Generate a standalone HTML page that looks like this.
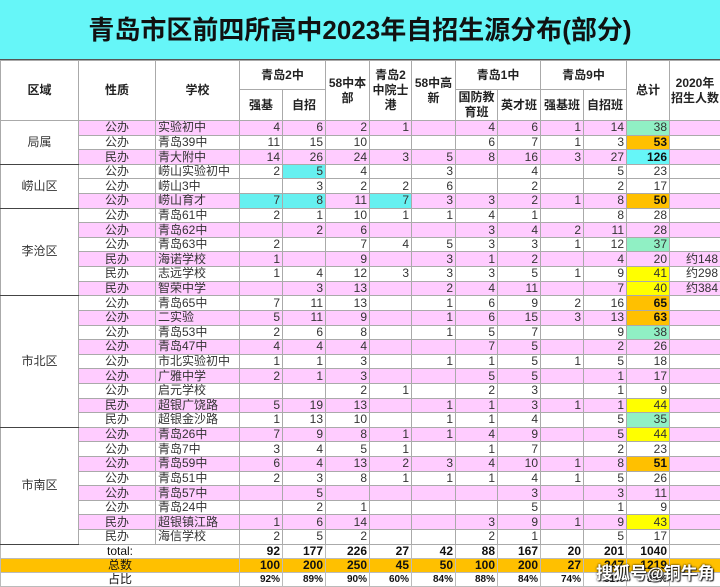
<!DOCTYPE html>
<html><head><meta charset="utf-8"><style>
*{margin:0;padding:0;box-sizing:border-box}
body{width:720px;height:585px;overflow:hidden;background:#fff;font-family:"Liberation Sans","Noto Sans CJK SC",sans-serif;position:relative}
.title{height:60px;background:#66f6f8;text-align:center;font-size:26px;font-weight:bold;line-height:60px;color:#111;border-bottom:1px solid #555}
table{border-collapse:collapse;table-layout:fixed;width:720px;position:absolute;top:60px;left:0}
td{border:1px solid #aaa;font-size:12px;color:#333;padding:0 2px;white-space:nowrap;overflow:hidden;line-height:13px}
thead td{font-weight:bold;color:#222;text-align:center;white-space:normal;font-size:12px;line-height:15px;padding:0}
tbody tr{height:14.62px}
td.n{text-align:right}
td.c{text-align:center}
tr.p td:not(.d){background:#ffccff}
.cy{background:#66f0f0!important}
.g{background:#90f0c4!important}
.o{background:#ffc000!important;font-weight:bold;color:#111}
.y{background:#ffff00!important}
.b{background:#66f6f8!important;font-weight:bold;color:#111}
td.d{text-align:center;background:#fff;border-top:1px solid #444;border-bottom:1px solid #444}
tfoot tr{height:14px}
tfoot td{font-weight:bold;color:#111;text-align:right;border-color:#bbb}
tfoot tr.t td{border-top:1px solid #444}
tfoot tr.s td{background:#ffc000}
tfoot tr.r td{font-size:10px}
tfoot tr.r td.l{font-size:12px}
tfoot td.l{text-align:center;font-weight:normal}
.wm{position:absolute;left:596px;top:559px;font-size:17px;font-weight:bold;color:#fff;text-shadow:0 0 2px #000,1px 1px 1px #333;letter-spacing:0px}
</style></head><body>
<div class="title">青岛市区前四所高中2023年自招生源分布(部分)</div>
<table>
<colgroup><col style="width:78px"><col style="width:77px"><col style="width:84px"><col style="width:43px"><col style="width:43px"><col style="width:44px"><col style="width:42px"><col style="width:44px"><col style="width:42px"><col style="width:43px"><col style="width:43px"><col style="width:43px"><col style="width:43px"><col style="width:51px"></colgroup>
<thead>
<tr style="height:29px"><td rowspan="2">区域</td><td rowspan="2">性质</td><td rowspan="2">学校</td><td colspan="2">青岛2中</td><td rowspan="2">58中本<br>部</td><td rowspan="2">青岛2<br>中院士<br>港</td><td rowspan="2">58中高<br>新</td><td colspan="2">青岛1中</td><td colspan="2">青岛9中</td><td rowspan="2">总计</td><td rowspan="2">2020年<br>招生人数</td></tr>
<tr style="height:29px"><td>强基</td><td>自招</td><td>国防教<br>育班</td><td>英才班</td><td>强基班</td><td>自招班</td></tr>
</thead>
<tbody>
<tr class="p"><td class="d" rowspan="3">局属</td><td class="c">公办</td><td>实验初中</td><td class="n">4</td><td class="n">6</td><td class="n">2</td><td class="n">1</td><td class="n"></td><td class="n">4</td><td class="n">6</td><td class="n">1</td><td class="n">14</td><td class="n g">38</td><td></td></tr>
<tr><td class="c">公办</td><td>青岛39中</td><td class="n">11</td><td class="n">15</td><td class="n">10</td><td class="n"></td><td class="n"></td><td class="n">6</td><td class="n">7</td><td class="n">1</td><td class="n">3</td><td class="n o">53</td><td></td></tr>
<tr class="p"><td class="c">民办</td><td>青大附中</td><td class="n">14</td><td class="n">26</td><td class="n">24</td><td class="n">3</td><td class="n">5</td><td class="n">8</td><td class="n">16</td><td class="n">3</td><td class="n">27</td><td class="n b">126</td><td></td></tr>
<tr><td class="d" rowspan="3">崂山区</td><td class="c">公办</td><td>崂山实验初中</td><td class="n">2</td><td class="n cy">5</td><td class="n">4</td><td class="n"></td><td class="n">3</td><td class="n"></td><td class="n">4</td><td class="n"></td><td class="n">5</td><td class="n">23</td><td></td></tr>
<tr><td class="c">公办</td><td>崂山3中</td><td class="n"></td><td class="n">3</td><td class="n">2</td><td class="n">2</td><td class="n">6</td><td class="n"></td><td class="n">2</td><td class="n"></td><td class="n">2</td><td class="n">17</td><td></td></tr>
<tr class="p"><td class="c">公办</td><td>崂山育才</td><td class="n cy">7</td><td class="n cy">8</td><td class="n">11</td><td class="n cy">7</td><td class="n">3</td><td class="n">3</td><td class="n">2</td><td class="n">1</td><td class="n">8</td><td class="n o">50</td><td></td></tr>
<tr><td class="d" rowspan="6">李沧区</td><td class="c">公办</td><td>青岛61中</td><td class="n">2</td><td class="n">1</td><td class="n">10</td><td class="n">1</td><td class="n">1</td><td class="n">4</td><td class="n">1</td><td class="n"></td><td class="n">8</td><td class="n">28</td><td></td></tr>
<tr class="p"><td class="c">公办</td><td>青岛62中</td><td class="n"></td><td class="n">2</td><td class="n">6</td><td class="n"></td><td class="n"></td><td class="n">3</td><td class="n">4</td><td class="n">2</td><td class="n">11</td><td class="n">28</td><td></td></tr>
<tr><td class="c">公办</td><td>青岛63中</td><td class="n">2</td><td class="n"></td><td class="n">7</td><td class="n">4</td><td class="n">5</td><td class="n">3</td><td class="n">3</td><td class="n">1</td><td class="n">12</td><td class="n g">37</td><td></td></tr>
<tr class="p"><td class="c">民办</td><td>海诺学校</td><td class="n">1</td><td class="n"></td><td class="n">9</td><td class="n"></td><td class="n">3</td><td class="n">1</td><td class="n">2</td><td class="n"></td><td class="n">4</td><td class="n">20</td><td class="n">约148</td></tr>
<tr><td class="c">民办</td><td>志远学校</td><td class="n">1</td><td class="n">4</td><td class="n">12</td><td class="n">3</td><td class="n">3</td><td class="n">3</td><td class="n">5</td><td class="n">1</td><td class="n">9</td><td class="n y">41</td><td class="n">约298</td></tr>
<tr class="p"><td class="c">民办</td><td>智荣中学</td><td class="n"></td><td class="n">3</td><td class="n">13</td><td class="n"></td><td class="n">2</td><td class="n">4</td><td class="n">11</td><td class="n"></td><td class="n">7</td><td class="n y">40</td><td class="n">约384</td></tr>
<tr><td class="d" rowspan="9">市北区</td><td class="c">公办</td><td>青岛65中</td><td class="n">7</td><td class="n">11</td><td class="n">13</td><td class="n"></td><td class="n">1</td><td class="n">6</td><td class="n">9</td><td class="n">2</td><td class="n">16</td><td class="n o">65</td><td></td></tr>
<tr class="p"><td class="c">公办</td><td>二实验</td><td class="n">5</td><td class="n">11</td><td class="n">9</td><td class="n"></td><td class="n">1</td><td class="n">6</td><td class="n">15</td><td class="n">3</td><td class="n">13</td><td class="n o">63</td><td></td></tr>
<tr><td class="c">公办</td><td>青岛53中</td><td class="n">2</td><td class="n">6</td><td class="n">8</td><td class="n"></td><td class="n">1</td><td class="n">5</td><td class="n">7</td><td class="n"></td><td class="n">9</td><td class="n g">38</td><td></td></tr>
<tr class="p"><td class="c">公办</td><td>青岛47中</td><td class="n">4</td><td class="n">4</td><td class="n">4</td><td class="n"></td><td class="n"></td><td class="n">7</td><td class="n">5</td><td class="n"></td><td class="n">2</td><td class="n">26</td><td></td></tr>
<tr><td class="c">公办</td><td>市北实验初中</td><td class="n">1</td><td class="n">1</td><td class="n">3</td><td class="n"></td><td class="n">1</td><td class="n">1</td><td class="n">5</td><td class="n">1</td><td class="n">5</td><td class="n">18</td><td></td></tr>
<tr class="p"><td class="c">公办</td><td>广雅中学</td><td class="n">2</td><td class="n">1</td><td class="n">3</td><td class="n"></td><td class="n"></td><td class="n">5</td><td class="n">5</td><td class="n"></td><td class="n">1</td><td class="n">17</td><td></td></tr>
<tr><td class="c">公办</td><td>启元学校</td><td class="n"></td><td class="n"></td><td class="n">2</td><td class="n">1</td><td class="n"></td><td class="n">2</td><td class="n">3</td><td class="n"></td><td class="n">1</td><td class="n">9</td><td></td></tr>
<tr class="p"><td class="c">民办</td><td>超银广饶路</td><td class="n">5</td><td class="n">19</td><td class="n">13</td><td class="n"></td><td class="n">1</td><td class="n">1</td><td class="n">3</td><td class="n">1</td><td class="n">1</td><td class="n y">44</td><td></td></tr>
<tr><td class="c">民办</td><td>超银金沙路</td><td class="n">1</td><td class="n">13</td><td class="n">10</td><td class="n"></td><td class="n">1</td><td class="n">1</td><td class="n">4</td><td class="n"></td><td class="n">5</td><td class="n g">35</td><td></td></tr>
<tr class="p"><td class="d" rowspan="8">市南区</td><td class="c">公办</td><td>青岛26中</td><td class="n">7</td><td class="n">9</td><td class="n">8</td><td class="n">1</td><td class="n">1</td><td class="n">4</td><td class="n">9</td><td class="n"></td><td class="n">5</td><td class="n y">44</td><td></td></tr>
<tr><td class="c">公办</td><td>青岛7中</td><td class="n">3</td><td class="n">4</td><td class="n">5</td><td class="n">1</td><td class="n"></td><td class="n">1</td><td class="n">7</td><td class="n"></td><td class="n">2</td><td class="n">23</td><td></td></tr>
<tr class="p"><td class="c">公办</td><td>青岛59中</td><td class="n">6</td><td class="n">4</td><td class="n">13</td><td class="n">2</td><td class="n">3</td><td class="n">4</td><td class="n">10</td><td class="n">1</td><td class="n">8</td><td class="n o">51</td><td></td></tr>
<tr><td class="c">公办</td><td>青岛51中</td><td class="n">2</td><td class="n">3</td><td class="n">8</td><td class="n">1</td><td class="n">1</td><td class="n">1</td><td class="n">4</td><td class="n">1</td><td class="n">5</td><td class="n">26</td><td></td></tr>
<tr class="p"><td class="c">公办</td><td>青岛57中</td><td class="n"></td><td class="n">5</td><td class="n"></td><td class="n"></td><td class="n"></td><td class="n"></td><td class="n">3</td><td class="n"></td><td class="n">3</td><td class="n">11</td><td></td></tr>
<tr><td class="c">公办</td><td>青岛24中</td><td class="n"></td><td class="n">2</td><td class="n">1</td><td class="n"></td><td class="n"></td><td class="n"></td><td class="n">5</td><td class="n"></td><td class="n">1</td><td class="n">9</td><td></td></tr>
<tr class="p"><td class="c">民办</td><td>超银镇江路</td><td class="n">1</td><td class="n">6</td><td class="n">14</td><td class="n"></td><td class="n"></td><td class="n">3</td><td class="n">9</td><td class="n">1</td><td class="n">9</td><td class="n y">43</td><td></td></tr>
<tr><td class="c">民办</td><td>海信学校</td><td class="n">2</td><td class="n">5</td><td class="n">2</td><td class="n"></td><td class="n"></td><td class="n">2</td><td class="n">1</td><td class="n"></td><td class="n">5</td><td class="n">17</td><td></td></tr>
</tbody>
<tfoot>
<tr class="t"><td class="l" colspan="3">total:</td><td>92</td><td>177</td><td>226</td><td>27</td><td>42</td><td>88</td><td>167</td><td>20</td><td>201</td><td>1040</td><td></td></tr>
<tr class="s"><td class="l" colspan="3">总数</td><td>100</td><td>200</td><td>250</td><td>45</td><td>50</td><td>100</td><td>200</td><td>27</td><td>247</td><td>1219</td><td></td></tr>
<tr class="r"><td class="l" colspan="3">占比</td><td>92%</td><td>89%</td><td>90%</td><td>60%</td><td>84%</td><td>88%</td><td>84%</td><td>74%</td><td>81%</td><td>85%</td><td></td></tr>
</tfoot>
</table>
<div class="wm">搜狐号@铜牛角</div>
</body></html>
